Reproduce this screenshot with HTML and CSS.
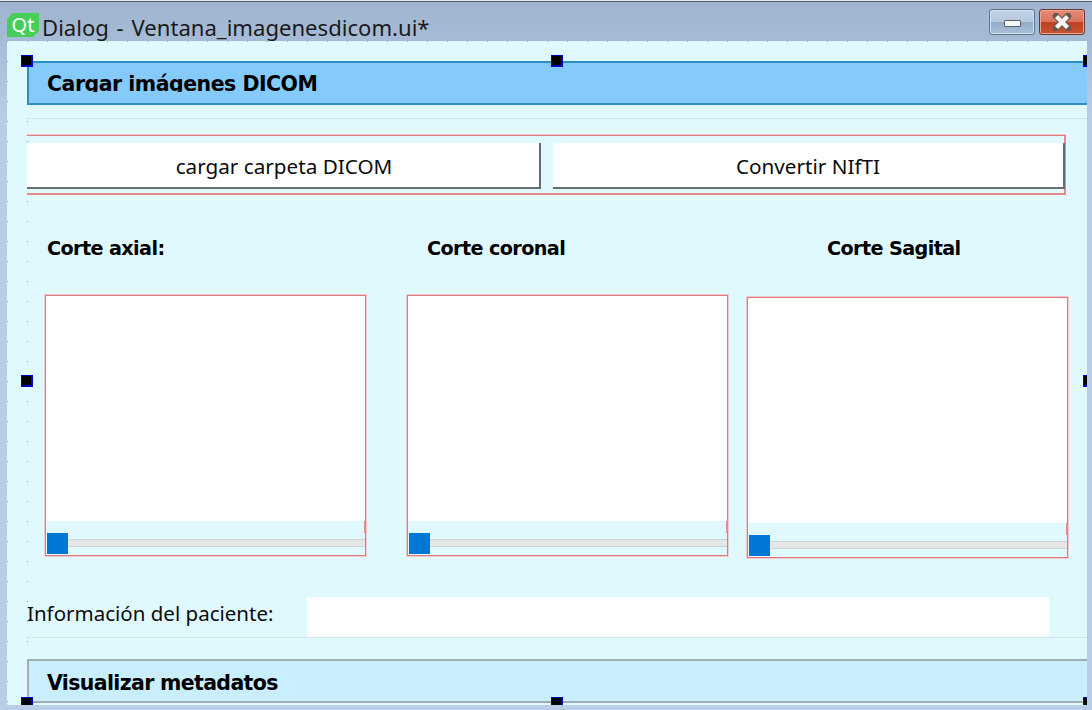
FILE: index.html
```html
<!DOCTYPE html>
<html lang="es">
<head>
<meta charset="utf-8">
<title>Dialog - Ventana_imagenesdicom.ui*</title>
<link rel="stylesheet" href="styles.css">
</head>
<body>
<div class="window">
  <header class="titlebar">
    <div class="qt-logo">Qt</div>
    <div class="title">Dialog - Ventana_imagenesdicom.ui*</div>
    <div class="win-buttons">
      <div class="win-btn win-min"><span class="min-glyph"></span></div>
      <div class="win-btn win-close">
        <svg class="close-glyph" width="20" height="18" viewBox="0 0 20 18"><path d="M4 3L16 15M16 3L4 15" fill="none" stroke="#6a5650" stroke-width="6.5" stroke-linecap="round"/><path d="M4.5 3.5L15.5 14.5M15.5 3.5L4.5 14.5" fill="none" stroke="#f4f4f4" stroke-width="4.4"/></svg>
      </div>
    </div>
  </header>
  <main class="client">
    <div class="band band-load"><div class="band-text">Cargar imágenes DICOM</div></div>
    <div class="rule rule-top"></div>
    <div class="btn-group">
      <div class="push push-a">cargar carpeta DICOM</div>
      <div class="push push-b">Convertir NIfTI</div>
    </div>
    <div class="labels">
      <div class="cut-label cut-a">Corte axial:</div>
      <div class="cut-label cut-b">Corte coronal</div>
      <div class="cut-label">Corte Sagital</div>
    </div>
    <div class="panels">
      <div class="panel">
        <div class="view"></div>
        <div class="slider"><span class="mark"></span><span class="groove"></span><span class="thumb"></span></div>
      </div>
      <div class="panel">
        <div class="view"></div>
        <div class="slider"><span class="mark"></span><span class="groove"></span><span class="thumb"></span></div>
      </div>
      <div class="panel panel-low">
        <div class="view"></div>
        <div class="slider"><span class="mark"></span><span class="groove"></span><span class="thumb"></span></div>
      </div>
    </div>
    <div class="info-row">
      <div class="info-label">Información del paciente:</div>
      <div class="info-box"></div>
    </div>
    <div class="band band-meta"><div class="band-text">Visualizar metadatos</div></div>
    <span class="handle h-tl"></span><span class="handle h-tc"></span><span class="handle h-tr"></span>
    <span class="handle h-ml"></span><span class="handle h-mr"></span>
    <span class="handle h-bl"></span><span class="handle h-bc"></span><span class="handle h-br"></span>
  </main>
</div>
</body>
</html>
```
FILE: styles.css
```css
* { box-sizing: border-box; }
html, body { margin: 0; padding: 0; }
body { width: 1092px; height: 710px; overflow: hidden; background: #b9cde6; font-family: "Noto Sans", "Open Sans", sans-serif; color: #000; }
.window { width: 1092px; height: 710px; display: flex; flex-direction: column; padding: 0 5px 5px 7px; background: linear-gradient(180deg, #9fb4cf 0, #a6bbd6 40px, #b9cde6 120px); border-top: 1px solid #e2e6ea; }
.titlebar { height: 40px; margin: 0 -5px 0 -7px; padding: 0 7px; border-top: 1px solid #59626c; display: flex; align-items: flex-start; position: relative; }
.qt-logo { width: 32px; height: 24px; margin-top: 11px; background: #45ce58; color: #fff; font-size: 20px; line-height: 24px; text-align: center; clip-path: polygon(6px 0, 100% 0, 100% calc(100% - 6px), calc(100% - 6px) 100%, 0 100%, 0 6px); }
.title { margin: 7px 0 0 3px; font-size: 22.1px; word-spacing: 2px; line-height: 36px; color: #1a1a1a; white-space: nowrap; }
.win-buttons { margin: 7px 0 0 auto; display: flex; gap: 4px; }
.win-btn { width: 46px; height: 26px; border-radius: 3px; display: flex; align-items: center; justify-content: center; }
.win-min { background: linear-gradient(180deg, #c3d3e7 0, #b6c8de 50%, #93abc8 50%, #a9bfd9 100%); border: 1px solid #5f7590; box-shadow: inset 0 0 0 1px #d5e1ef; }
.min-glyph { width: 17px; height: 7px; background: #f4f6f8; border: 1px solid #55606d; border-radius: 1px; margin-top: 2px; }
.win-close { background: linear-gradient(180deg, #e58a77 0, #d9725c 50%, #bf4023 50%, #c6532f 100%); border: 1px solid #6d3a30; box-shadow: inset 0 0 0 1px #eba796; }
.client { width: 1080px; height: 664px; position: relative; overflow: hidden; padding-top: 20px; background-color: #dff9ff; background-image:
  repeating-linear-gradient(90deg, #8ea4b4 0 1px, transparent 1px 20px),
  repeating-linear-gradient(90deg, #8ea4b4 0 1px, transparent 1px 20px),
  repeating-linear-gradient(180deg, #8ea4b4 0 1px, transparent 1px 20px),
  repeating-linear-gradient(180deg, #8ea4b4 0 1px, transparent 1px 20px);
  background-size: 100% 1px, 100% 1px, 1px 100%, 1px 100%; background-position: 0 0, 0 20px, 0 0, 20px 0; background-repeat: no-repeat; }
.band { margin-left: 20px; }
.band-text { padding-left: 18px; font-family: "DejaVu Sans", sans-serif; font-weight: 700; font-size: 20.5px; letter-spacing: -0.5px; white-space: nowrap; overflow: hidden; }
.band-load { height: 44px; background: #84cbfb; border-top: 2px solid #2f8fc4; border-bottom: 2px solid #2f8fc4; border-left: 2px solid #2f8fc4; }
.band-load .band-text { height: 29px; line-height: 42px; }
.rule { margin-left: 20px; border-top: 1px dotted #b5d4dc; }
.rule-top { margin-top: 13px; }
.btn-group { width: 1039px; height: 60px; margin: 16px 0 0 20px; padding-top: 7px; display: flex; gap: 12px; border-top: 1px solid #e07a7a; border-right: 2px solid #e28b8b; border-bottom: 2px solid #e28b8b; box-shadow: 0 -1px 0 #f3c9cf; }
.push { flex: none; height: 46px; padding-top: 2px; background: #fff; border-right: 2px solid #686e6e; border-bottom: 2px solid #686e6e; display: flex; align-items: center; justify-content: center; font-size: 20.7px; color: #0b0b0b; }
.push-a { width: 514px; padding-left: 2px; }
.push-b { width: 512px; }
.labels { display: flex; margin: 39px 0 0 40px; height: 30px; }
.cut-label { font-family: "DejaVu Sans", sans-serif; font-weight: 700; font-size: 19.2px; letter-spacing: -0.6px; line-height: 30px; white-space: nowrap; }
.cut-a { width: 380px; }
.cut-b { width: 400px; }
.panels { display: flex; align-items: flex-start; margin: 31px 0 0 38px; height: 263px; }
.panel { width: 321px; height: 261px; margin-right: 41px; border: 1px solid #e07a7a; box-shadow: 0 0 0 1px #f3c9cf; display: flex; flex-direction: column; }
.panel + .panel { margin-right: 19px; }
.panel-low { margin-top: 2px; }
.view { height: 225px; background: #fff; }
.slider { flex: 1; position: relative; }
.mark { position: absolute; right: -1px; top: 0; width: 2px; height: 12px; background: #e28b8b; }
.groove { position: absolute; left: 1px; right: 0; top: 18px; height: 8px; background: #e5e7e7; border-top: 1px solid #cfd3d3; border-bottom: 1px solid #cfd3d3; }
.thumb { position: absolute; left: 1px; top: 12px; width: 21px; height: 21px; background: #0078d7; }
.info-row { display: flex; align-items: center; height: 41px; margin: 39px 0 0 20px; border-bottom: 1px dotted #b5d4dc; }
.info-label { width: 280px; font-size: 20.5px; color: #0b0b0b; white-space: nowrap; line-height: 34px; margin-top: -8px; }
.info-box { width: 742px; height: 40px; background: #fff; }
.band-meta { height: 44px; margin-top: 21px; background: #c9eefe; border-top: 2px solid #a2adb3; border-left: 2px solid #a2adb3; border-bottom: 2px solid #a2adb3; }
.band-meta .band-text { padding-top: 1px; line-height: 42px; letter-spacing: -0.65px; }
.handle { position: absolute; width: 12px; height: 12px; background: #000; border: 2px solid #0000c8; border-width: 1px 2px 2px 1px; }
.h-tl { left: 14px; top: 14px; }
.h-tc { left: 544px; top: 14px; }
.h-tr { left: 1076px; top: 14px; }
.h-ml { left: 14px; top: 334px; }
.h-mr { left: 1076px; top: 334px; }
.h-bl { left: 14px; top: 656px; }
.h-bc { left: 544px; top: 656px; }
.h-br { left: 1076px; top: 656px; }
```
